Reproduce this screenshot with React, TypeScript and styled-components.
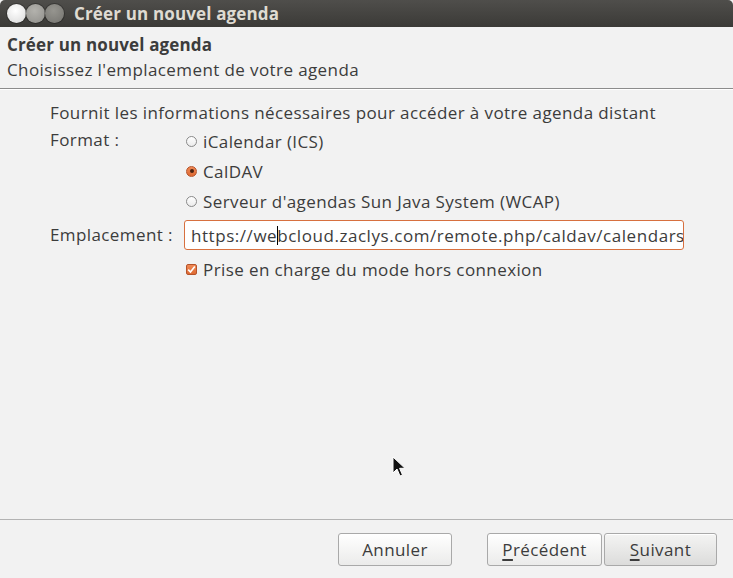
import React from "react";
import styled, { createGlobalStyle } from "styled-components";

const Global = createGlobalStyle`
  html, body { margin: 0; padding: 0; background: #f2f2f2; }
  body { font-family: "Open Sans", "Noto Sans", sans-serif; color: #3c3c3c; letter-spacing: 0.4px; }
  * { box-sizing: border-box; }
`;

const Window = styled.div`
  width: 733px;
  height: 578px;
  display: flex;
  flex-direction: column;
  background: #f2f2f2;
  position: relative;
  overflow: hidden;
`;

const TitleBar = styled.div`
  height: 27px;
  flex: none;
  display: flex;
  align-items: center;
  padding-left: 7px;
  background: linear-gradient(#4f4e4b, #3b3a37);
  border-top-right-radius: 5px;
  border-top-left-radius: 5px;
`;

const WinButtons = styled.div`
  display: flex;
  margin-right: 10px;
`;

const WinDot = styled.span<{ $c: string; $e: string }>`
  width: 19px;
  height: 19px;
  border-radius: 50%;
  background: radial-gradient(circle at 45% 35%, ${(p) => p.$c}, ${(p) => p.$e});
  box-shadow: 0 0 0 1px rgba(0,0,0,0.25);
`;

const TitleText = styled.div`
  font-size: 17px;
  font-weight: 700;
  color: #dfdbd2;
  letter-spacing: 0.15px;
`;

const Header = styled.div`
  height: 62px;
  flex: none;
  padding: 7px 7px 0;
  border-bottom: 1px solid #8c8c8c;
  box-shadow: 0 1px 0 #ffffff;
`;

const HeaderTitle = styled.div`
  font-size: 17px;
  font-weight: 700;
  letter-spacing: 0.15px;
  line-height: 22px;
`;

const HeaderSub = styled.div`
  font-size: 17px;
  line-height: 28px;
`;

const Body = styled.div`
  flex: 1;
  padding: 13px 0 0 50px;
`;

const Intro = styled.div`
  font-size: 17px;
  line-height: 22px;
  margin-bottom: 2px;
`;

const FormGrid = styled.div`
  display: grid;
  grid-template-columns: 134px 500px;
`;

const Label = styled.div<{ $top: number }>`
  font-size: 17px;
  line-height: 22px;
  padding-top: ${(p) => p.$top}px;
`;

const Options = styled.div`
  display: flex;
  flex-direction: column;
`;

const OptionRow = styled.div`
  height: 30px;
  display: flex;
  align-items: center;
  gap: 6px;
  padding-left: 2px;
  font-size: 17px;
`;

const Radio = styled.span<{ $on?: boolean }>`
  width: 11px;
  height: 11px;
  border-radius: 50%;
  flex: none;
  position: relative;
  border: 1px solid ${(p) => (p.$on ? "#b5532a" : "#8a8a8a")};
  background: ${(p) => (p.$on ? "linear-gradient(#f08a56, #de6a33)" : "linear-gradient(#ffffff, #ececec)")};
  &::after {
    content: "";
    display: ${(p) => (p.$on ? "block" : "none")};
    position: absolute;
    left: 2.5px;
    top: 2.5px;
    width: 4px;
    height: 4px;
    border-radius: 50%;
    background: #4a2312;
  }
`;

const Field = styled.div`
  height: 30px;
  width: 500px;
  border: 1px solid #d7703f;
  border-radius: 3px;
  background: #ffffff;
  display: flex;
  align-items: center;
  padding-left: 6px;
  overflow: hidden;
  white-space: nowrap;
  font-size: 17px;
  letter-spacing: 0.55px;
  margin-top: 4px;
`;

const Caret = styled.span`
  display: inline-block;
  flex: none;
  width: 1px;
  height: 19px;
  background: #000;
  margin-right: -1px;
`;

const CheckRow = styled.div`
  height: 38px;
  display: flex;
  align-items: center;
  gap: 6px;
  padding-left: 2px;
  font-size: 17px;
`;

const CheckBox = styled.span`
  width: 11px;
  height: 11px;
  flex: none;
  border-radius: 2px;
  border: 1px solid #b5532a;
  background: linear-gradient(#f08a56, #de6a33);
  display: flex;
  align-items: center;
  justify-content: center;
`;

const Footer = styled.div`
  height: 59px;
  flex: none;
  border-top: 1px solid #b3b3b3;
  display: flex;
  align-items: flex-start;
  padding: 13px 16px 0 0;
  justify-content: flex-end;
`;

const Btn = styled.button<{ $w: number; $default?: boolean }>`
  height: 33px;
  width: ${(p) => p.$w}px;
  border: 1px solid #a9a9a9;
  border-radius: 3px;
  font-family: inherit;
  font-size: 17px;
  letter-spacing: 0.4px;
  color: #3c3c3c;
  background: ${(p) =>
    p.$default ? "linear-gradient(#f4f4f3, #dcdcdb)" : "linear-gradient(#ffffff, #ebebea)"};
  box-shadow: inset 0 1px 0 #fff;
  padding: 0;
  u { text-decoration-thickness: 2px; text-underline-offset: 3px; }
`;

const BtnGap = styled.div<{ $w: number }>`
  width: ${(p) => p.$w}px;
`;

const Pointer = styled.svg`
  position: absolute;
  left: 392px;
  top: 456px;
`;

export default function App() {
  return (
    <>
      <Global />
      <Window>
        <TitleBar>
          <WinButtons>
            <WinDot $c="#ffffff" $e="#d8d8d8" />
            <WinDot $c="#b3b2ad" $e="#8f8e8a" />
            <WinDot $c="#96958f" $e="#74736f" />
          </WinButtons>
          <TitleText>Créer un nouvel agenda</TitleText>
        </TitleBar>
        <Header>
          <HeaderTitle>Créer un nouvel agenda</HeaderTitle>
          <HeaderSub>Choisissez l'emplacement de votre agenda</HeaderSub>
        </Header>
        <Body>
          <Intro>Fournit les informations nécessaires pour accéder à votre agenda distant</Intro>
          <FormGrid>
            <Label $top={3}>Format :</Label>
            <Options>
              <OptionRow><Radio />iCalendar (ICS)</OptionRow>
              <OptionRow><Radio $on />CalDAV</OptionRow>
              <OptionRow><Radio />Serveur d'agendas Sun Java System (WCAP)</OptionRow>
            </Options>
            <Label $top={8}>Emplacement :</Label>
            <div>
              <Field>
                https://we<Caret />bcloud.zaclys.com/remote.php/caldav/calendars
              </Field>
            </div>
            <div />
            <CheckRow>
              <CheckBox>
                <svg width="9" height="9" viewBox="0 0 9 9">
                  <path d="M1.2 4.6 L3.5 7 L7.8 1.6" stroke="#ffffff" strokeWidth="1.6" fill="none" />
                </svg>
              </CheckBox>
              Prise en charge du mode hors connexion
            </CheckRow>
          </FormGrid>
        </Body>
        <Footer>
          <Btn $w={114}>Annuler</Btn>
          <BtnGap $w={35} />
          <Btn $w={115}><u>P</u>récédent</Btn>
          <BtnGap $w={2} />
          <Btn $w={113} $default><u>S</u>uivant</Btn>
        </Footer>
        <Pointer width="14" height="22" viewBox="0 0 14 22">
          <path d="M1 1 L1 17 L5 13 L8 20 L10.5 19 L7.6 12.3 L13 12.3 Z" fill="#111" stroke="#fff" strokeWidth="1" />
        </Pointer>
      </Window>
    </>
  );
}
